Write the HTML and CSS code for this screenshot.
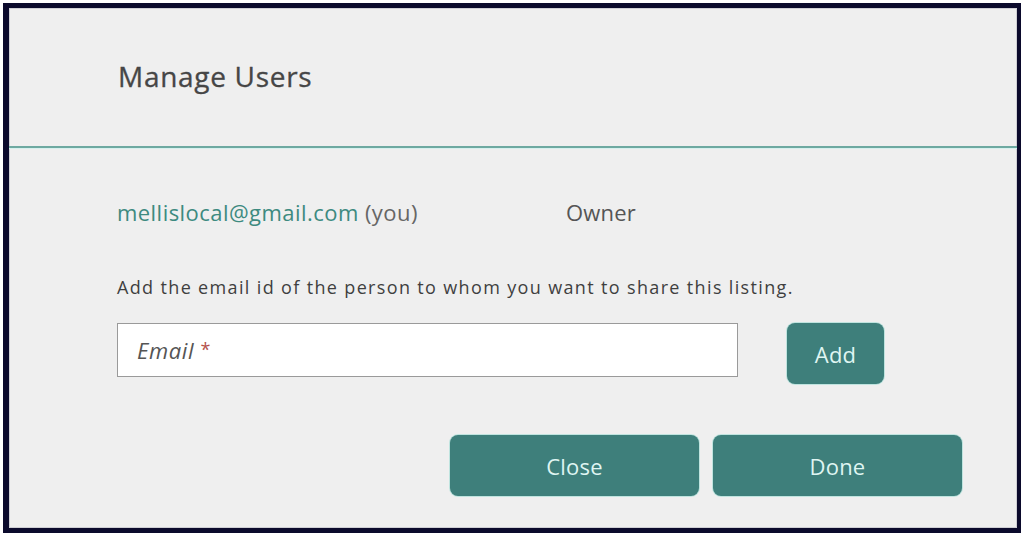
FILE: index.html
```html
<!DOCTYPE html>
<html lang="en">
<head>
  <meta charset="UTF-8" />
  <meta name="viewport" content="width=device-width, initial-scale=1.0"/>
  <title>Manage Users</title>
  <link rel="stylesheet" href="styles.css">
</head>
<body>

  <div class="dialog">
    <div class="dialog-header">
      <h1>Manage Users</h1>
    </div>

    <div class="dialog-body">
      <div class="user-row">
        <span class="user-email">mellislocal@gmail.com <span class="you">(you)</span></span>
        <span class="user-role">Owner</span>
      </div>

      <p class="hint">Add the email id of the person to whom you want to share this listing.</p>

      <div class="add-row">
        <div class="email-field">
          <span class="placeholder">Email <span class="req">*</span></span>
        </div>
        <button class="btn btn-add">Add</button>
      </div>

      <div class="actions">
        <button class="btn btn-wide">Close</button>
        <button class="btn btn-wide">Done</button>
      </div>
    </div>
  </div>

</body>
</html>
```

FILE: styles.css
```css
body {
  margin: 0;
  background-color: #ffffff;
  font-family: "Open Sans", "Noto Sans", sans-serif;
}

.dialog {
  margin: 3px;
  width: 1008px;
  height: 520px;
  border-style: solid;
  border-color: #0b0a2c;
  border-width: 5px 4px 5px 6px;
  background-color: #efefef;
  box-shadow: inset 0 0 0 1px #cfcfd4;
}

.dialog-header {
  height: 138px;
  border-bottom: 2px solid #6ea9a1;
  box-shadow: 0 1px 0 #d6f1ee;
  display: flex;
  align-items: center;
  padding-left: 109px;
}

h1 {
  margin: 0 0 2px 0;
  font-size: 28px;
  font-weight: 400;
  color: #464646;
  letter-spacing: 0.7px;
  -webkit-text-stroke: 0.3px #464646;
}

.dialog-body {
  padding-left: 108px;
}

.user-row {
  display: flex;
  margin-top: 49px;
  font-size: 22px;
  line-height: 30px;
}

.user-email {
  width: 449px;
  color: #3d8a80;
  letter-spacing: 0.45px;
}

.you {
  color: #666666;
}

.user-role {
  color: #555555;
  letter-spacing: 0.2px;
}

.hint {
  margin: 47px 0 0 0;
  font-size: 18px;
  line-height: 26px;
  color: #3f3f3f;
  letter-spacing: 1.35px;
}

.add-row {
  display: flex;
  align-items: flex-start;
  margin-top: 23px;
}

.email-field {
  width: 600px;
  height: 52px;
  background-color: #ffffff;
  border: 1px solid #9a9a9a;
  display: flex;
  align-items: center;
  padding-left: 19px;
  box-sizing: content-box;
}

.placeholder {
  font-size: 22px;
  font-style: italic;
  color: #555555;
  letter-spacing: 0.6px;
}

.req {
  color: #b5524d;
  font-style: normal;
  font-size: 18px;
  vertical-align: 3px;
}

.btn {
  background-color: #3e7f7b;
  color: #dff5f2;
  border: none;
  border-radius: 8px;
  font-family: "Open Sans", "Noto Sans", sans-serif;
  font-size: 22px;
  letter-spacing: 0.2px;
  cursor: pointer;
  box-shadow: 0 0 0 1px #bfe4df;
}

.btn-add {
  width: 97px;
  height: 61px;
  margin-left: 49px;
}

.actions {
  display: flex;
  gap: 14px;
  margin-top: 51px;
  margin-left: 333px;
}

.btn-wide {
  width: 249px;
  height: 61px;
}
```
